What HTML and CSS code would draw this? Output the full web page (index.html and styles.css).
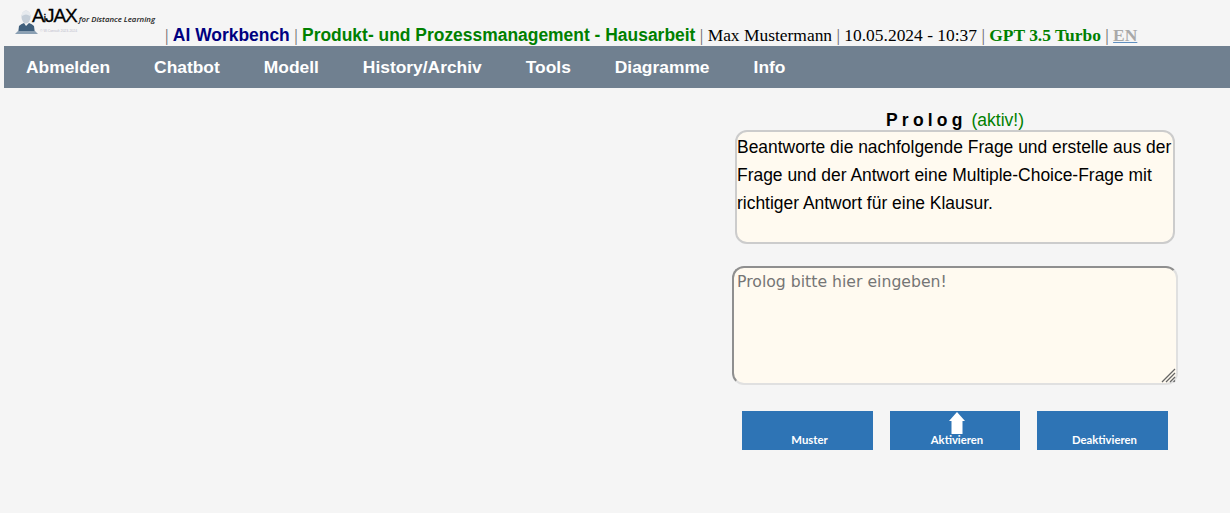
FILE: index.html
```html
<!DOCTYPE html>
<html lang="de">
<head>
<meta charset="utf-8">
<title>AI Workbench</title>
<link rel="stylesheet" href="styles.css">
</head>
<body>
<header class="top">
  <div class="logo">
    <svg class="logo-fig" width="24" height="25" viewBox="0 0 24 25" aria-hidden="true">
      <ellipse cx="11" cy="8" rx="4.500" ry="6.500" fill="#c4ced8"/>
      <path d="M7 4Q11 -1 15 4L15 7Q11 4 7 7Z" fill="#e6eaee"/>
      <path d="M3 25L4 17Q6 15 9 14L11 17L14 14Q17 15 19 17L20 25Z" fill="#3f5f7c"/>
      <path d="M0 25L3 22L20 22L23 25Z" fill="#8ba0b3"/>
    </svg>
    <div class="logo-txt">
      <div class="logo-row"><span class="logo-a">A<small>i</small>JAX</span><span class="logo-tag">for Distance Learning</span></div>
      <div class="logo-copy">© W.Consult 2023-2024</div>
    </div>
  </div>
  <div class="info">
    <span class="sep">|</span> <b class="sans navy">AI Workbench</b> <span class="sep">|</span> <b class="sans green">Produkt- und Prozessmanagement - Hausarbeit</b> <span class="sep">|</span> Max Mustermann <span class="sep">|</span> 10.05.2024 - 10:37 <span class="sep">|</span> <b class="green">GPT 3.5 Turbo</b> <span class="sep">|</span> <a class="lang" href="#">EN</a>
  </div>
</header>
<nav class="nav">
  <a href="#">Abmelden</a>
  <a href="#">Chatbot</a>
  <a href="#">Modell</a>
  <a href="#">History/Archiv</a>
  <a href="#">Tools</a>
  <a href="#">Diagramme</a>
  <a href="#">Info</a>
</nav>
<main class="main">
  <section class="panel">
    <h2 class="title"><b>Prolog</b> <span>(aktiv!)</span></h2>
    <div class="prolog">Beantworte die nachfolgende Frage und erstelle aus der Frage und der Antwort eine Multiple-Choice-Frage mit richtiger Antwort für eine Klausur.</div>
    <div class="input-wrap">
      <textarea class="input" placeholder="Prolog bitte hier eingeben!"></textarea>
      <svg class="grip" width="15" height="15" viewBox="0 0 15 15" aria-hidden="true">
        <path d="M1 14L14 1M5 14L14 5M9 14L14 9M12.500 14L14 12.500" stroke="#666" stroke-width="1.300" fill="none"/>
      </svg>
    </div>
    <div class="buttons">
      <button class="btn" type="button">Muster</button>
      <button class="btn wide" type="button">
        <svg class="arrow" width="16" height="22" viewBox="0 0 16 22" aria-hidden="true"><path d="M8 0L16 9H13.500V22H2.500V9H0Z" fill="#fff"/></svg>
        Aktivieren
      </button>
      <button class="btn" type="button">Deaktivieren</button>
    </div>
  </section>
</main>
</body>
</html>
```
FILE: styles.css
```css
* { box-sizing: border-box; }
html, body { margin: 0; padding: 0; }
body {
  background: #f5f5f5;
  color: #000;
  font-family: "Liberation Serif", serif;
  height: 513px;
  overflow: hidden;
}
.top {
  display: flex;
  align-items: flex-end;
  height: 46px;
  padding-left: 15px;
}
.logo {
  display: flex;
  align-items: flex-start;
  width: 150px;
  height: 41px;
  flex: none;
}
.logo-fig { margin-top: 4px; flex: none; margin-right: -7px; }
.logo-txt { display: flex; flex-direction: column; }
.logo-row { display: flex; align-items: baseline; white-space: nowrap; height: 22px; }
.logo-a {
  font-family: "Liberation Sans", sans-serif;
  font-size: 19px;
  letter-spacing: -1px;
  -webkit-text-stroke: 0.3px #000;
}
.logo-a small { font-size: 10px; }
.logo-tag {
  font-family: "Open Sans", sans-serif;
  font-size: 7.800px;
  font-style: italic;
  font-weight: 600;
  margin-left: 2px;
  color: #222;
}
.logo-copy {
  font-family: "Liberation Sans", sans-serif;
  font-size: 3.500px;
  color: #bbc;
  margin: 2px 0 0 8px;
}
.info {
  font-size: 17.460px;
  line-height: 20px;
  white-space: nowrap;
  padding-bottom: 1px;
}
.sep { color: #666; }
.sans { font-family: "Liberation Sans", sans-serif; }
.navy { color: #000080; }
.green { color: #008000; }
.lang { color: #a9a9a9; font-weight: bold; text-decoration-color: #5f8fbf; }
.nav {
  display: flex;
  gap: 44px;
  align-items: center;
  height: 42px;
  margin-left: 4px;
  padding: 1px 0 0 22px;
  background: #708090;
}
.nav a {
  color: #fff;
  font-family: "Liberation Sans", sans-serif;
  font-size: 17.400px;
  font-weight: bold;
  text-decoration: none;
}
.main {
  display: flex;
  justify-content: flex-end;
  padding-right: 52px;
}
.panel {
  width: 446px;
  display: flex;
  flex-direction: column;
  align-items: center;
}
.title {
  margin: 22px 0 0;
  height: 20px;
  font-size: 17.500px;
  line-height: 20px;
  font-weight: normal;
  font-family: "Liberation Sans", sans-serif;
}
.title b { letter-spacing: 4.200px; }
.title span { color: #008000; }
.prolog {
  width: 440px;
  height: 114px;
  padding-top: 1px;
  background: #fffaf0;
  border: 2px solid #cccccc;
  border-radius: 12px;
  font-family: "Liberation Sans", sans-serif;
  font-size: 17.450px;
  line-height: 28px;
  overflow: hidden;
}
.input-wrap {
  position: relative;
  width: 446px;
  height: 119px;
  margin-top: 22px;
}
.input {
  display: block;
  width: 100%;
  height: 100%;
  padding: 4px 3px 2px;
  background: #fffaf0;
  border: 2px solid;
  border-color: #8f8f8f #e0e0e0 #e0e0e0 #8f8f8f;
  border-radius: 12px;
  font-family: "DejaVu Sans", sans-serif;
  font-size: 15.700px;
  color: #000;
  resize: none;
}
.input::placeholder { color: #757575; opacity: 1; }
.grip { position: absolute; right: 2px; bottom: 2px; pointer-events: none; }
.buttons {
  display: flex;
  gap: 17px;
  margin-top: 26px;
}
.btn {
  position: relative;
  width: 131px;
  height: 39px;
  border: 0;
  padding: 0 0 4px 4px;
  display: flex;
  align-items: flex-end;
  justify-content: center;
  background: #2e74b5;
  color: #fff;
  font-family: Lato, sans-serif;
  font-size: 11.300px;
  font-weight: 700;
}
.btn.wide { width: 130px; }
.arrow { position: absolute; top: 1px; left: 59px; }
```
